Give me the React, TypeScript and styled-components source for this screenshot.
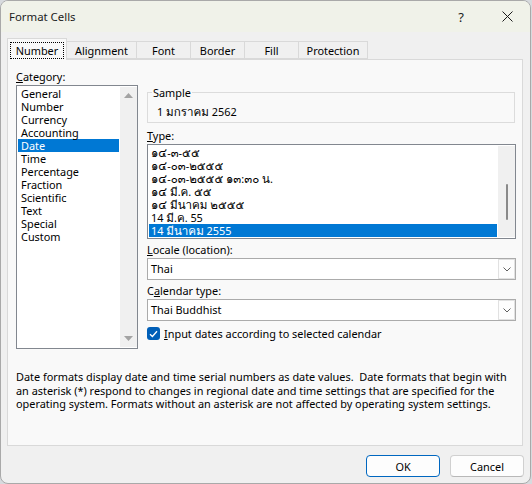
import React from "react";
import styled, { createGlobalStyle } from "styled-components";

const UI_FONT = `"Segoe UI", "Noto Sans", Loma, "Noto Sans Thai", sans-serif`;

const GlobalStyle = createGlobalStyle`
  html, body {
    margin: 0;
    padding: 0;
    background: #d7dade;
  }
  body {
    width: 532px;
    height: 484px;
    overflow: hidden;
    font-family: ${UI_FONT};
    font-size: 10.9px;
    color: #000;
  }
  * {
    box-sizing: border-box;
  }
`;

/* ---------- window frame ---------- */

const Window = styled.div`
  width: 531px;
  height: 484px;
  background: #f0f0f0;
  border: 1px solid #a9a9a9;
  border-radius: 8px;
  overflow: hidden;
  display: flex;
  flex-direction: column;
`;

const TitleBar = styled.div`
  height: 31px;
  flex: none;
  display: flex;
  align-items: center;
  background: #f0f2e9;
  padding-left: 8px;
`;

const Title = styled.div`
  flex: 1;
  font-size: 11.4px;
  color: #1b1b1b;
`;

const CaptionButton = styled.div`
  width: 46px;
  height: 31px;
  display: flex;
  align-items: center;
  justify-content: center;
  color: #1b1b1b;
  font-size: 13px;
`;

const Body = styled.div`
  flex: 1;
  display: flex;
  flex-direction: column;
  padding: 6px 6px 0 6px;
`;

/* ---------- tabs ---------- */

const TabStrip = styled.div`
  height: 21px;
  display: flex;
  align-items: flex-end;
`;

const Tab = styled.div<{ $w: number; $active?: boolean }>`
  position: relative;
  z-index: 1;
  width: ${(p) => p.$w}px;
  height: ${(p) => (p.$active ? 22 : 18)}px;
  margin-bottom: ${(p) => (p.$active ? -1 : 0)}px;
  margin-right: -1px;
  display: flex;
  justify-content: center;
  align-items: flex-end;
  padding-bottom: ${(p) => (p.$active ? 1 : 0)}px;
  background: ${(p) => (p.$active ? "#f9f9f9" : "#f0f0f0")};
  border: 1px solid #d9d9d9;
  border-bottom: ${(p) => (p.$active ? "none" : "1px solid #d9d9d9")};
`;

const TabLabel = styled.span<{ $focus?: boolean }>`
  line-height: 15px;
  padding: 0 5px;
  border: 1px dotted ${(p) => (p.$focus ? "#000" : "transparent")};
  border-bottom-width: ${(p) => (p.$focus ? 1 : 0)}px;
  white-space: nowrap;
`;

const Panel = styled.div`
  width: 516px;
  height: 387px;
  background: #f9f9f9;
  border: 1px solid #d9d9d9;
  padding: 9px 6px 0 8px;
  display: flex;
  flex-direction: column;
`;

const Columns = styled.div`
  display: flex;
  gap: 9px;
  align-items: flex-start;
`;

const CategoryColumn = styled.div`
  width: 122px;
  display: flex;
  flex-direction: column;
`;

const DetailColumn = styled.div`
  width: 369px;
  display: flex;
  flex-direction: column;
`;

const Label = styled.div<{ $mt?: number }>`
  line-height: 15px;
  margin-top: ${(p) => p.$mt ?? 0}px;
  margin-bottom: 1px;
  white-space: nowrap;
`;

/* Thai script runs are set in a Tahoma-like face a touch larger than the Latin text */
const Thai = styled.span`
  font-family: Loma, "Noto Sans Thai", sans-serif;
  font-size: 11.6px;
  line-height: 1;
`;

const withThai = (s: string) =>
  s.split(/([\u0E00-\u0E7F]+)/).map((part, i) =>
    /[\u0E00-\u0E7F]/.test(part) ? <Thai key={i}>{part}</Thai> : part
  );

/* ---------- list boxes ---------- */

const ListBox = styled.div<{ $h: number }>`
  height: ${(p) => p.$h}px;
  background: #fff;
  border: 1px solid #82878f;
  padding: 1px 0 1px 1px;
  display: flex;
`;

const ListItems = styled.div`
  flex: 1;
  padding-right: 1px;
`;

const ListRow = styled.div<{ $selected?: boolean; $indent: number }>`
  height: 13px;
  line-height: 13px;
  padding-left: ${(p) => p.$indent}px;
  white-space: nowrap;
  background: ${(p) => (p.$selected ? "#0078d4" : "transparent")};
  color: ${(p) => (p.$selected ? "#fff" : "#000")};
`;

const ScrollTrack = styled.div`
  width: 17px;
  background: #f0f0f0;
  display: flex;
  flex-direction: column;
  align-items: center;
  justify-content: space-between;
  padding: 6px 0 6px;
`;

const ThinTrack = styled.div`
  width: 17px;
  background: #f0f0f0;
  display: flex;
  justify-content: center;
  padding-top: 38px;
`;

const Thumb = styled.div`
  width: 2px;
  height: 36px;
  border-radius: 1px;
  background: #8a8a8a;
`;

const Arrow = styled.svg`
  display: block;
`;

/* ---------- sample group ---------- */

const Group = styled.div`
  position: relative;
  margin-top: 23px;
  width: 368px;
  height: 31px;
  border: 1px solid #dcdcdc;
  padding: 11px 0 0 9px;
  line-height: 15px;
  white-space: nowrap;
`;

const Legend = styled.span`
  position: absolute;
  left: 4px;
  top: -8px;
  padding: 0 1px;
  line-height: 15px;
  background: #f9f9f9;
`;

/* ---------- combo boxes ---------- */

const Combo = styled.div`
  height: 22px;
  background: #fff;
  border: 1px solid #ababab;
  display: flex;
  align-items: stretch;
`;

const ComboValue = styled.div`
  flex: 1;
  padding-left: 3px;
  line-height: 20px;
  white-space: nowrap;
`;

const ComboButton = styled.div`
  width: 17px;
  border: 1px solid #e1e1e1;
  background: #fdfdfd;
  display: flex;
  align-items: center;
  justify-content: center;
`;

/* ---------- checkbox ---------- */

const CheckRow = styled.div`
  margin-top: 5px;
  display: flex;
  align-items: center;
  gap: 4px;
  line-height: 15px;
  white-space: nowrap;
`;

const CheckBox = styled.div`
  width: 13px;
  height: 13px;
  border-radius: 3px;
  background: #005fb8;
  display: flex;
  align-items: center;
  justify-content: center;
`;

/* ---------- description and buttons ---------- */

const Description = styled.p`
  margin: 21px 0 0 0;
  line-height: 13.5px;
  white-space: nowrap;
`;

const ButtonRow = styled.div`
  display: flex;
  justify-content: flex-end;
  gap: 10px;
  margin-top: 9px;
`;

const Button = styled.div<{ $default?: boolean }>`
  width: 74px;
  height: 22px;
  border-radius: 4px;
  background: #fdfdfd;
  border: 1px solid ${(p) => (p.$default ? "#0067c0" : "#d0d0d0")};
  border-bottom-color: ${(p) => (p.$default ? "#0067c0" : "#b8b8b8")};
  display: flex;
  align-items: center;
  justify-content: center;
  line-height: 15px;
`;

const u = (s: string) => <u>{s}</u>;

const categories = [
  "General",
  "Number",
  "Currency",
  "Accounting",
  "Date",
  "Time",
  "Percentage",
  "Fraction",
  "Scientific",
  "Text",
  "Special",
  "Custom",
];

const dateTypes = [
  "๑๔-๓-๕๕",
  "๑๔-๐๓-๒๕๕๕",
  "๑๔-๐๓-๒๕๕๕ ๑๓:๓๐ น.",
  "๑๔ มี.ค. ๕๕",
  "๑๔ มีนาคม ๒๕๕๕",
  "14 มี.ค. 55",
  "14 มีนาคม 2555",
];

const tabs = [
  { name: "Number", w: 60 },
  { name: "Alignment", w: 71 },
  { name: "Font", w: 55 },
  { name: "Border", w: 55 },
  { name: "Fill", w: 55 },
  { name: "Protection", w: 70 },
];

const UpArrow = () => (
  <Arrow width="9" height="5" viewBox="0 0 9 5">
    <path d="M4.5 0 L9 5 L0 5 Z" fill="#a3a3a3" />
  </Arrow>
);

const DownArrow = () => (
  <Arrow width="9" height="5" viewBox="0 0 9 5">
    <path d="M0 0 L9 0 L4.5 5 Z" fill="#a3a3a3" />
  </Arrow>
);

const Chevron = () => (
  <svg width="8" height="5" viewBox="0 0 8 5">
    <path d="M0.5 0.5 L4 4 L7.5 0.5" fill="none" stroke="#5f5f5f" strokeWidth="1" />
  </svg>
);

const CheckMark = () => (
  <svg width="9" height="8" viewBox="0 0 9 8">
    <path d="M1 4.2 L3.4 6.5 L8 1.3" fill="none" stroke="#fff" strokeWidth="1.3" />
  </svg>
);

const CloseGlyph = () => (
  <svg width="11" height="11" viewBox="0 0 11 11">
    <path d="M0.5 0.5 L10.5 10.5 M10.5 0.5 L0.5 10.5" stroke="#1b1b1b" strokeWidth="1" />
  </svg>
);

export default function App() {
  return (
    <>
      <GlobalStyle />
      <Window>
        <TitleBar>
          <Title>Format Cells</Title>
          <CaptionButton>?</CaptionButton>
          <CaptionButton>
            <CloseGlyph />
          </CaptionButton>
        </TitleBar>
        <Body>
          <TabStrip>
            {tabs.map((t, i) => (
              <Tab key={t.name} $w={t.w} $active={i === 0}>
                <TabLabel $focus={i === 0}>{t.name}</TabLabel>
              </Tab>
            ))}
          </TabStrip>
          <Panel>
            <Columns>
              <CategoryColumn>
                <Label>{u("C")}ategory:</Label>
                <ListBox $h={264}>
                  <ListItems>
                    {categories.map((c) => (
                      <ListRow key={c} $indent={3} $selected={c === "Date"}>
                        {c}
                      </ListRow>
                    ))}
                  </ListItems>
                  <ScrollTrack>
                    <UpArrow />
                    <DownArrow />
                  </ScrollTrack>
                </ListBox>
              </CategoryColumn>
              <DetailColumn>
                <Group>
                  <Legend>Sample</Legend>
                  {withThai("1 มกราคม 2562")}
                </Group>
                <Label $mt={5}>{u("T")}ype:</Label>
                <ListBox $h={95}>
                  <ListItems>
                    {dateTypes.map((d, i) => (
                      <ListRow key={d} $indent={2} $selected={i === dateTypes.length - 1}>
                        {withThai(d)}
                      </ListRow>
                    ))}
                  </ListItems>
                  <ThinTrack>
                    <Thumb />
                  </ThinTrack>
                </ListBox>
                <Label $mt={3}>{u("L")}ocale (location):</Label>
                <Combo>
                  <ComboValue>Thai</ComboValue>
                  <ComboButton>
                    <Chevron />
                  </ComboButton>
                </Combo>
                <Label $mt={3}>
                  C{u("a")}lendar type:
                </Label>
                <Combo>
                  <ComboValue>Thai Buddhist</ComboValue>
                  <ComboButton>
                    <Chevron />
                  </ComboButton>
                </Combo>
                <CheckRow>
                  <CheckBox>
                    <CheckMark />
                  </CheckBox>
                  <span>{u("I")}nput dates according to selected calendar</span>
                </CheckRow>
              </DetailColumn>
            </Columns>
            <Description>
              Date formats display date and time serial numbers as date values.&nbsp; Date formats that begin with
              <br />
              an asterisk (*) respond to changes in regional date and time settings that are specified for the
              <br />
              operating system. Formats without an asterisk are not affected by operating system settings.
            </Description>
          </Panel>
          <ButtonRow>
            <Button $default>OK</Button>
            <Button>Cancel</Button>
          </ButtonRow>
        </Body>
      </Window>
    </>
  );
}
